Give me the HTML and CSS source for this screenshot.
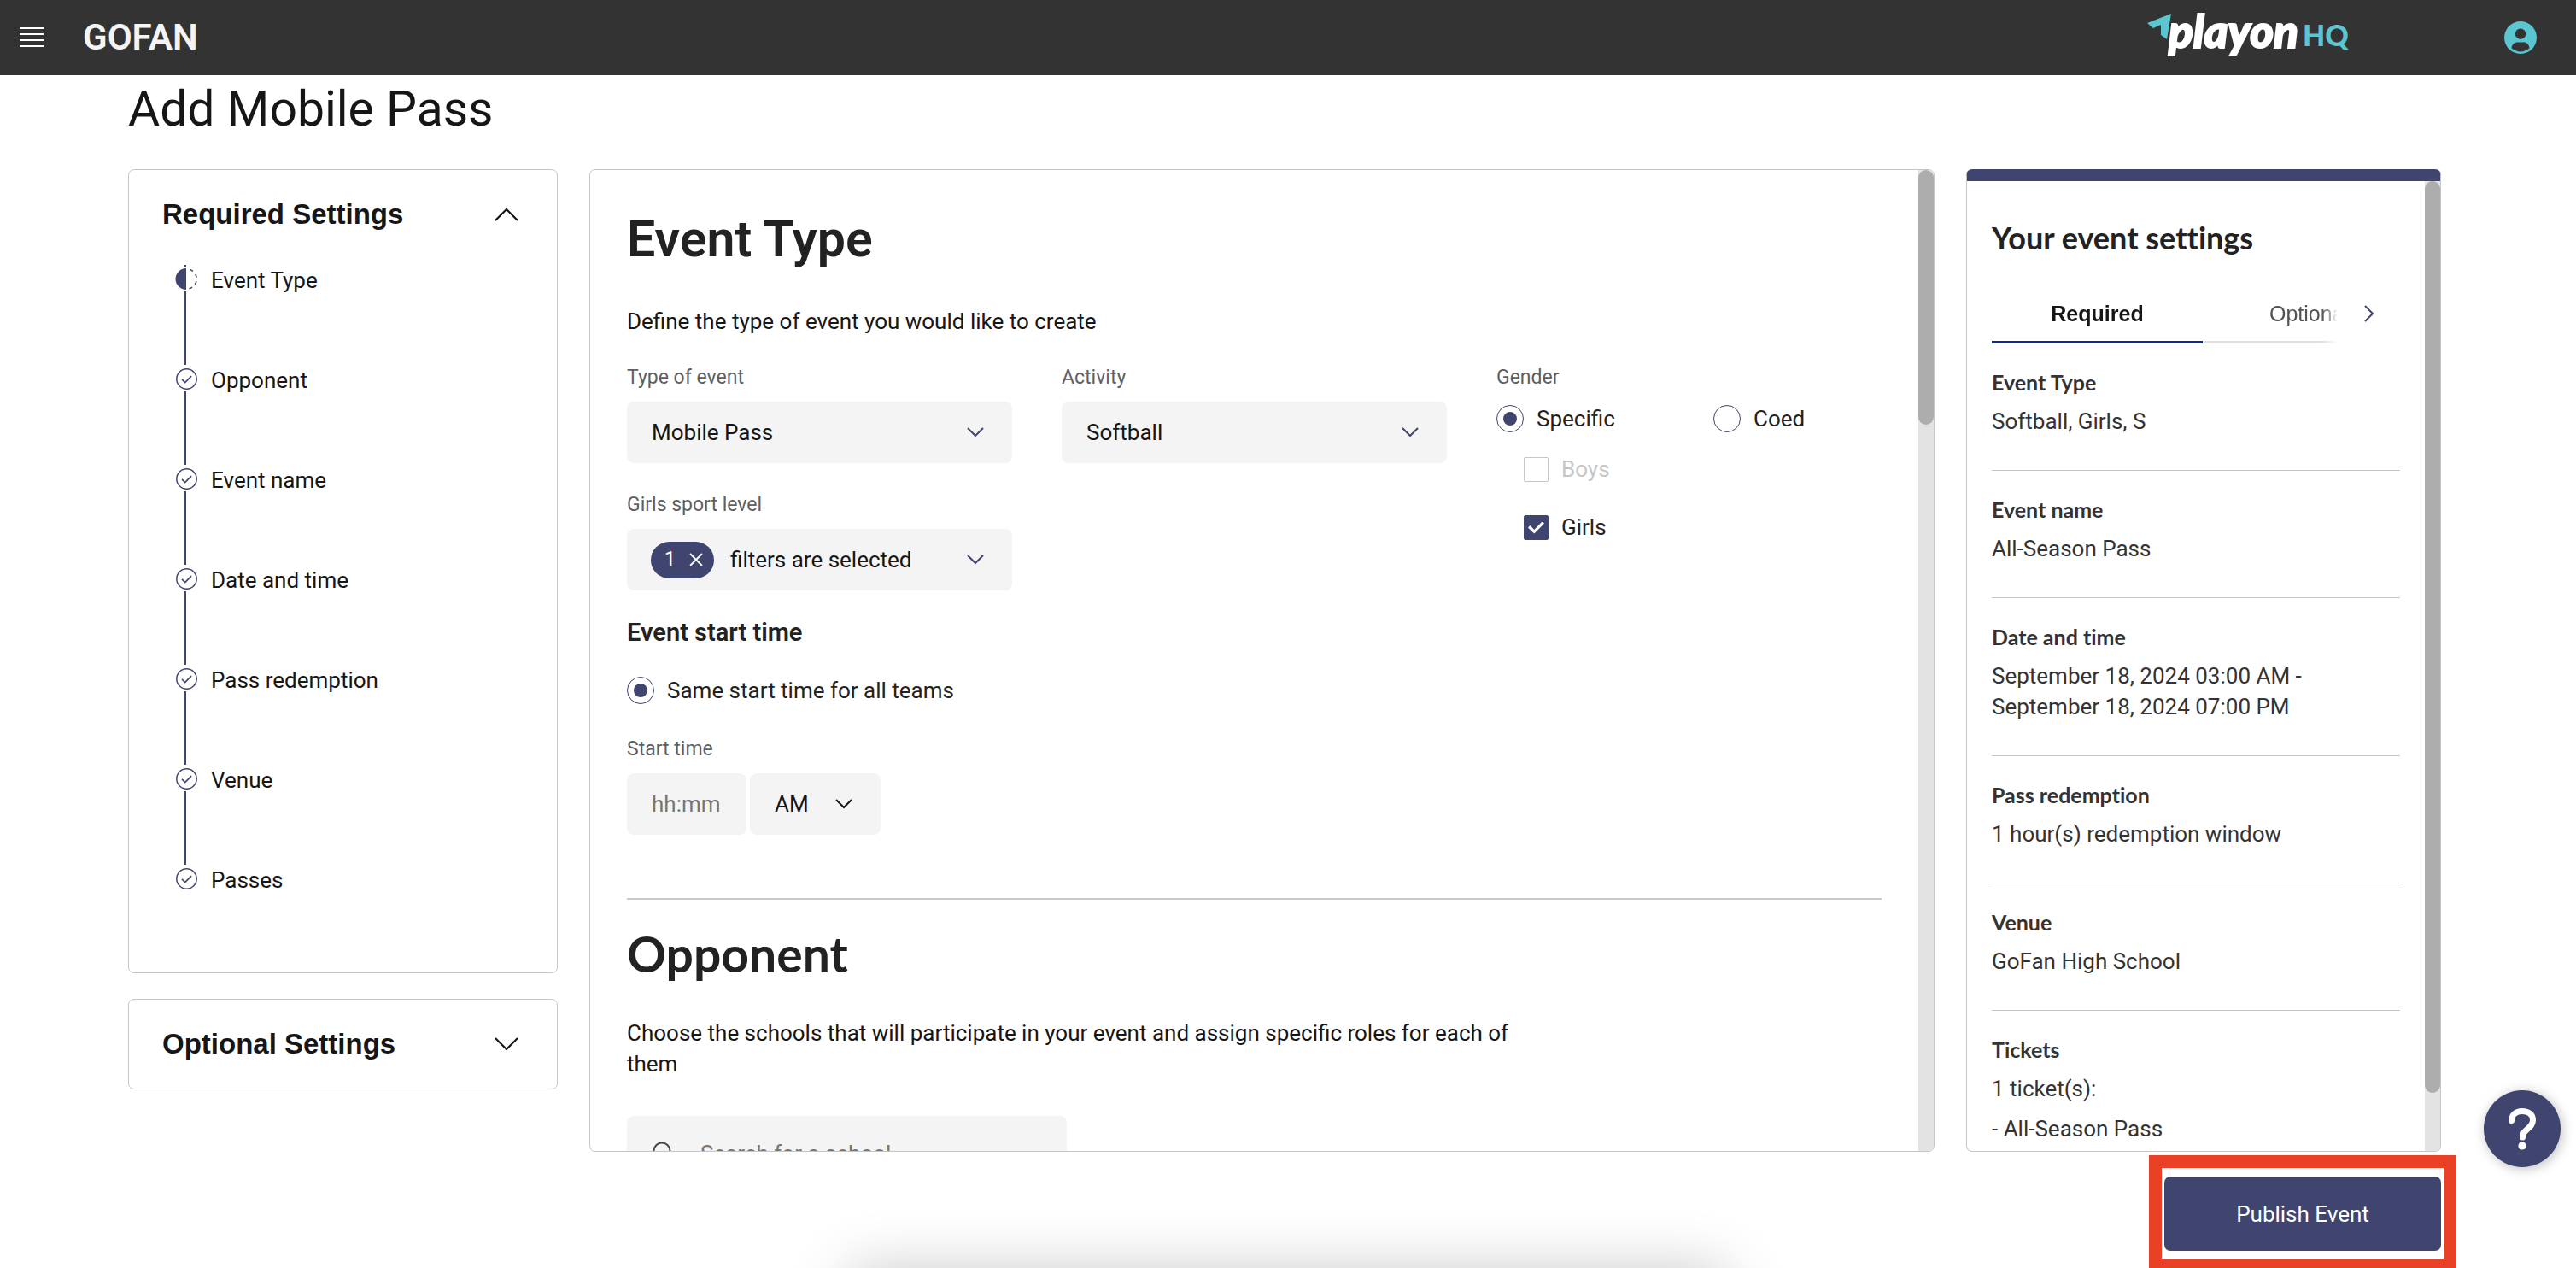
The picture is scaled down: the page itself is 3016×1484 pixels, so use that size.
FILE: index.html
```html
<!DOCTYPE html>
<html lang="en">
<head>
<meta charset="utf-8">
<title>GoFan - Add Mobile Pass</title>
<link rel="stylesheet" href="styles.css">
</head>
<body>
<svg class="sprite" aria-hidden="true">
  <symbol id="done" viewBox="0 0 25 25"><circle cx="12.500" cy="12.500" r="11.700" fill="none" stroke="currentColor" stroke-width="1.500"/><path d="M7 12.800l3.700 3.700 7.400-7.300" fill="none" stroke="currentColor" stroke-width="1.700"/></symbol>
  <symbol id="down" viewBox="0 0 20 12"><path d="M1 1l9 9 9-9" fill="none" stroke="currentColor" stroke-width="2"/></symbol>
</svg>

<header class="topbar">
  <button class="menu" aria-label="Menu">
    <svg width="28" height="24" viewBox="0 0 28 24"><path d="M0 1h28M0 8h28M0 15h28M0 22h28" stroke="#fff" stroke-width="2"/></svg>
  </button>
  <span class="brand">GOFAN</span>
  <svg class="logo" width="240" height="84" viewBox="0 0 240 84" role="img" aria-label="playon HQ">
    <path d="M0 25L28 14l-5 30-7-5V27l-9 4z" fill="#5bc5d0"/>
    <text class="logo-play" x="25" y="54">playon</text>
    <text class="logo-hq" x="182" y="52">HQ</text>
  </svg>
  <button class="account" aria-label="Account">
    <svg width="38" height="38" viewBox="0 0 38 38"><path fill="#5bc5d0" fill-rule="evenodd" d="M19 0a19 19 0 1 0 0 38a19 19 0 0 0 0-38zM19 8.500a6.200 6.200 0 1 1 0 12.400a6.200 6.200 0 0 1 0-12.400zM8.500 31.300C9 27 12 24.500 15 24.500h8c3 0 6 2.500 6.500 6.800C26.500 34 23 35.500 19 35.500S11.500 34 8.500 31.300z"/></svg>
  </button>
</header>

<main class="page">
  <h1 class="page-title">Add Mobile Pass</h1>

  <div class="columns">
    <nav class="side" aria-label="Settings">
      <section class="card side-card side-open">
        <button class="side-head" aria-expanded="true">Required Settings
          <svg class="up" width="28" height="16" viewBox="0 0 28 16"><path d="M1 15L14 2l13 13" fill="none" stroke="currentColor" stroke-width="2.200"/></svg>
        </button>
        <ol class="steps">
          <li class="step"><span class="marker"><svg class="mark" viewBox="0 0 25 25"><path d="M11-4v2" stroke="currentColor" stroke-width="2"/><path d="M12 0a12.500 12.500 0 0 0 0 25z" fill="currentColor"/><path d="M12.500 .800a11.700 11.700 0 0 1 0 23.400" fill="none" stroke="currentColor" stroke-width="1.600" stroke-dasharray="0 4 4 4.500 4 4.500 4 4.500 4 4"/></svg><i class="rail"></i></span><a href="#type">Event Type</a></li>
          <li class="step"><span class="marker"><svg class="mark"><use href="#done"/></svg><i class="rail"></i></span><a href="#opponent">Opponent</a></li>
          <li class="step"><span class="marker"><svg class="mark"><use href="#done"/></svg><i class="rail"></i></span><a href="#name">Event name</a></li>
          <li class="step"><span class="marker"><svg class="mark"><use href="#done"/></svg><i class="rail"></i></span><a href="#date">Date and time</a></li>
          <li class="step"><span class="marker"><svg class="mark"><use href="#done"/></svg><i class="rail"></i></span><a href="#redemption">Pass redemption</a></li>
          <li class="step"><span class="marker"><svg class="mark"><use href="#done"/></svg><i class="rail"></i></span><a href="#venue">Venue</a></li>
          <li class="step"><span class="marker"><svg class="mark"><use href="#done"/></svg></span><a href="#passes">Passes</a></li>
        </ol>
      </section>
      <section class="card side-card">
        <button class="side-head" aria-expanded="false">Optional Settings
          <svg width="28" height="16" viewBox="0 0 28 16"><path d="M1 1l13 13L27 1" fill="none" stroke="currentColor" stroke-width="2.200"/></svg>
        </button>
      </section>
    </nav>

    <section class="card panel">
      <form class="panel-body form">
        <h2 class="form-title" id="type">Event Type</h2>
        <p class="intro">Define the type of event you would like to create</p>
        <div class="fields">
          <div class="field">
            <label for="event-type">Type of event</label>
            <div class="select"><select id="event-type"><option>Mobile Pass</option></select><svg class="caret"><use href="#down"/></svg></div>
          </div>
          <div class="field">
            <label for="activity">Activity</label>
            <div class="select"><select id="activity"><option>Softball</option></select><svg class="caret"><use href="#down"/></svg></div>
          </div>
          <fieldset class="gender">
            <legend>Gender</legend>
            <div class="radios">
              <label class="choice"><input type="radio" name="gender" checked>Specific</label>
              <label class="choice"><input type="radio" name="gender">Coed</label>
            </div>
            <div class="checks">
              <label class="choice off"><input type="checkbox" disabled>Boys</label>
              <label class="choice"><input type="checkbox" checked>Girls</label>
            </div>
          </fieldset>
          <div class="field">
            <label for="level">Girls sport level</label>
            <div class="select tagged">
              <button type="button" class="pill" aria-label="Clear 1 filter">1 <svg width="16" height="16" viewBox="0 0 16 16"><path d="M1 1l14 14M15 1L1 15" stroke="#fff" stroke-width="1.800"/></svg></button>
              <select id="level"><option>filters are selected</option></select><svg class="caret"><use href="#down"/></svg>
            </div>
          </div>
        </div>
        <h3 class="sub-title">Event start time</h3>
        <label class="choice"><input type="radio" name="start" checked>Same start time for all teams</label>
        <div class="field start">
          <label for="start-time">Start time</label>
          <div class="time">
            <input class="text time-text" id="start-time" placeholder="hh:mm">
            <div class="select dark"><select aria-label="AM or PM"><option>AM</option></select><svg class="caret"><use href="#down"/></svg></div>
          </div>
        </div>
        <hr class="rule">
        <h2 class="form-title lato" id="opponent">Opponent</h2>
        <p class="intro">Choose the schools that will participate in your event and assign specific roles for each of them</p>
        <div class="search">
          <svg width="28" height="28" viewBox="0 0 28 28"><circle cx="11" cy="11" r="9.500" fill="none" stroke="#444" stroke-width="2"/><path d="M18 18l9 9" stroke="#444" stroke-width="2"/></svg>
          <input type="search" placeholder="Search for a school" aria-label="Search for a school">
        </div>
      </form>
      <div class="track"><div class="thumb thumb-form"></div></div>
    </section>

    <aside class="card panel summary">
      <div class="panel-body summary-body">
        <h2 class="summary-title">Your event settings</h2>
        <div class="tabs">
          <div class="tab-list" role="tablist">
            <button class="tab active" role="tab" aria-selected="true">Required</button>
            <button class="tab" role="tab" aria-selected="false">Optional</button>
          </div>
          <button class="tab-next" aria-label="Next tab"><svg width="12" height="20" viewBox="0 0 12 20"><path d="M1 1l9 9-9 9" fill="none" stroke="currentColor" stroke-width="2"/></svg></button>
        </div>
        <dl class="items">
          <div class="item"><dt>Event Type</dt><dd>Softball, Girls, S</dd></div>
          <div class="item"><dt>Event name</dt><dd>All-Season Pass</dd></div>
          <div class="item"><dt>Date and time</dt><dd>September 18, 2024 03:00 AM -<br>September 18, 2024 07:00 PM</dd></div>
          <div class="item"><dt>Pass redemption</dt><dd>1 hour(s) redemption window</dd></div>
          <div class="item"><dt>Venue</dt><dd>GoFan High School</dd></div>
          <div class="item"><dt>Tickets</dt><dd>1 ticket(s):</dd><dd>- All-Season Pass</dd></div>
        </dl>
      </div>
      <div class="track"><div class="thumb thumb-summary"></div></div>
    </aside>
  </div>

  <footer class="actions">
    <div class="highlight"><button class="publish">Publish Event</button></div>
  </footer>
</main>

<div class="dock-shadow"></div>
<button class="help" aria-label="Help">
  <svg width="38" height="50" viewBox="0 0 38 50"><path d="M6.500 15.500C6.500 8.500 12 4.500 19 4.500c7.500 0 12.500 4 12.500 10.500 0 5-3 7.500-6.500 10.500C21 29 19.500 30.500 19.500 35" fill="none" stroke="#fff" stroke-width="7" stroke-linecap="round"/><circle cx="19" cy="45" r="4.600" fill="#fff"/></svg>
</button>
</body>
</html>
```

FILE: styles.css
```css
:root {
  --navy: #3f456e;
  --line: #c6c6c6;
  --ink: #161616;
  --field: #f4f4f4;
  --body: Roboto, "Noto Sans", sans-serif;
  --head: Lato, "Open Sans", sans-serif;
  --arial: "Liberation Sans", Arial, sans-serif;
}
* { box-sizing: border-box; }
body {
  margin: 0;
  height: 100vh;
  display: flex;
  flex-direction: column;
  overflow: hidden;
  background: #fff;
  color: var(--ink);
  font: 26px/36px var(--body);
}
h1, h2, h3, p, ol, dl, dd { margin: 0; padding: 0; }
button, select, input { font: inherit; color: inherit; border: 0; background: none; padding: 0; margin: 0; }
button { cursor: pointer; }
svg { display: block; flex: none; }
.sprite { display: none; }

/* Top bar */
.topbar {
  flex: none;
  height: 88px;
  padding: 0 46px 0 23px;
  display: flex;
  align-items: center;
  background: #333;
}
.brand { margin-left: 46px; font-size: 42px; font-weight: 600; line-height: 48px; color: #f4f4f4; }
.logo { margin-left: auto; }
.logo-play { font: italic 900 53px var(--head); fill: #fff; stroke: #fff; stroke-width: 2px; }
.logo-hq { font: 900 34px var(--head); fill: #5bc5d0; }
.account { margin-left: 178px; }

/* Page frame */
.page { flex: 1; min-height: 0; display: flex; flex-direction: column; padding: 8px 158px 0 150px; }
.page-title { font-size: 57px; font-weight: 400; line-height: 64px; margin-bottom: 38px; }
.columns {
  flex: 1;
  min-height: 0;
  display: grid;
  grid-template-columns: 503px minmax(0, 1fr) 556px;
  grid-template-rows: minmax(0, 1fr);
  gap: 37px;
}
.card { border: 1px solid var(--line); border-radius: 7px; background: #fff; }

/* Left navigation */
.side { display: flex; flex-direction: column; gap: 30px; }
.side-card { padding: 32px 45px 32px 39px; }
.side-open { padding-bottom: 90px; }
.side-head {
  width: 100%;
  display: flex;
  justify-content: space-between;
  align-items: center;
  font: bold 33px/40px var(--arial);
}
.steps { list-style: none; margin-top: 39px; padding-left: 16px; }
.step { display: flex; gap: 16px; height: 117px; }
.step:last-child { height: 36px; }
.step a { color: inherit; text-decoration: none; }
.marker { width: 25px; padding-top: 4px; display: flex; flex-direction: column; gap: 2px; color: var(--navy); }
.mark { width: 25px; height: 25px; overflow: visible; }
.rail { flex: 1; width: 2px; margin-left: 10px; background: currentColor; }

/* Scrolling panels */
.panel { display: flex; overflow: hidden; }
.panel-body { flex: 1; min-width: 0; overflow: hidden; }
.track { flex: none; width: 18px; background: #e3e3e3; }
.thumb { border-radius: 9px; background: #adadad; }
.thumb-form { height: 26%; }
.thumb-summary { height: 94%; }

/* Form */
.form { padding: 49px 43px 0; }
.form-title { font-size: 59px; font-weight: 600; line-height: 64px; color: #222; margin-bottom: 46px; }
.lato { font-family: var(--head); font-size: 57px; font-weight: 700; margin-bottom: 43px; }
.intro { max-width: 1080px; }
.fields {
  display: grid;
  grid-template-columns: repeat(3, minmax(0, 1fr));
  gap: 35px 58px;
  margin: 34px 0 31px;
}
.field { display: flex; flex-direction: column; gap: 14px; }
.field > label, .gender legend { font-size: 23px; line-height: 28px; color: #5f5f5f; padding: 0; }
.select { display: grid; height: 72px; border-radius: 8px; background: var(--field); color: var(--navy); }
.select > select { grid-area: 1 / 1; appearance: none; padding: 0 70px 0 29px; color: var(--ink); outline: 0; }
.caret { grid-area: 1 / 1; align-self: center; justify-self: end; width: 20px; height: 12px; margin-right: 33px; pointer-events: none; }
.tagged { grid-template-columns: 102px 1fr; align-items: center; padding-left: 0; }
.tagged > select, .tagged > .caret { grid-area: 1 / 2; }
.tagged > select { padding-left: 19px; align-self: stretch; }
.pill {
  margin-left: 28px;
  width: 74px;
  height: 43px;
  display: flex;
  align-items: center;
  justify-content: space-between;
  padding: 0 13px 0 16px;
  border-radius: 22px;
  background: var(--navy);
  color: #fff;
  font-size: 23px;
}
.gender { border: 0; margin: 0; padding: 0; min-width: 0; grid-row: span 2; }
.radios { display: grid; grid-template-columns: 254px 1fr; margin-top: 18px; }
.checks { display: grid; gap: 39px; margin: 29px 0 0 32px; }
.choice { display: flex; align-items: center; gap: 15px; line-height: 32px; color: #222; }
.checks .choice { line-height: 29px; }
.choice.off { color: #c6c6c6; }
.choice input { appearance: none; display: grid; place-content: center; border: 1px solid var(--navy); }
.choice input[type="radio"] { width: 32px; height: 32px; border-radius: 50%; }
.choice input[type="radio"]:checked::before { content: ""; width: 16px; height: 16px; border-radius: 50%; background: var(--navy); }
.choice input[type="checkbox"] { width: 29px; height: 29px; border-radius: 2px; }
.choice input[type="checkbox"]:disabled { border-color: #c6c6c6; }
.choice input[type="checkbox"]:checked { background: var(--navy); }
.choice input[type="checkbox"]:checked::before {
  content: "";
  width: 19px;
  height: 14px;
  background: #fff;
  clip-path: polygon(0 50%, 13% 33%, 38% 68%, 87% 0, 100% 16%, 38% 100%);
}
.sub-title { font-size: 29px; font-weight: 600; line-height: 36px; color: #222; margin-bottom: 34px; }
.start { margin-top: 39px; }
.time { display: flex; gap: 4px; }
.text { height: 72px; border-radius: 8px; background: var(--field); padding: 0 29px; }
.time-text { width: 140px; }
.dark { width: 153px; color: var(--ink); }
input::placeholder { color: #767676; opacity: 1; }
.rule { height: 2px; border: 0; background: #c8cac9; margin: 74px 0 31px; }
.search {
  margin-top: 43px;
  width: 515px;
  height: 88px;
  padding-left: 30px;
  display: flex;
  align-items: center;
  gap: 28px;
  border-radius: 8px;
  background: var(--field);
}
.search input { flex: 1; height: 72px; appearance: none; }

/* Summary */
.summary { border-top: 14px solid var(--navy); }
.summary-body { padding: 44px 29px 0; color: #333; }
.summary-title { font: bold 36px/44px var(--head); font-variant-ligatures: none; color: #222; margin-bottom: 49px; }
.tabs { display: flex; }
.tab-list {
  flex: 1;
  min-width: 0;
  display: flex;
  gap: 1px;
  overflow: hidden;
  -webkit-mask-image: linear-gradient(to left, transparent, #000 18px);
  mask-image: linear-gradient(to left, transparent, #000 18px);
}
.tab { flex: none; width: 247px; padding-bottom: 14px; border-bottom: 3px solid #e0e0e0; font: 25px/36px var(--arial); color: #525252; }
.active { font-weight: bold; color: var(--ink); border-color: #10298e; }
.tab-next { flex: none; width: 73px; height: 36px; display: grid; place-content: center; color: var(--navy); }
.item { padding: 27px 0 39px; border-bottom: 1px solid var(--line); }
.item dt { font: bold 25px/36px var(--head); font-variant-ligatures: none; margin-bottom: 10px; }
.item dd + dd { margin-top: 11px; }

/* Footer and floating parts */
.actions { flex: none; display: flex; justify-content: flex-end; margin: 4px -18px 0 0; }
.highlight { border: solid #ea4025; border-width: 15px 15px 11px; padding: 10px 3px 9px; }
.publish { width: 324px; height: 87px; border-radius: 7px; background: var(--navy); color: #fff; }
.help {
  position: fixed;
  right: 18px;
  bottom: 118px;
  width: 90px;
  height: 90px;
  display: grid;
  place-content: center;
  border-radius: 50%;
  background: var(--navy);
  box-shadow: 2px 2px 14px rgba(0, 0, 0, .25);
}
.dock-shadow {
  position: fixed;
  left: 33%;
  right: 33%;
  bottom: -204px;
  height: 200px;
  box-shadow: 0 0 70px rgba(0, 0, 0, .23);
  pointer-events: none;
}
```
